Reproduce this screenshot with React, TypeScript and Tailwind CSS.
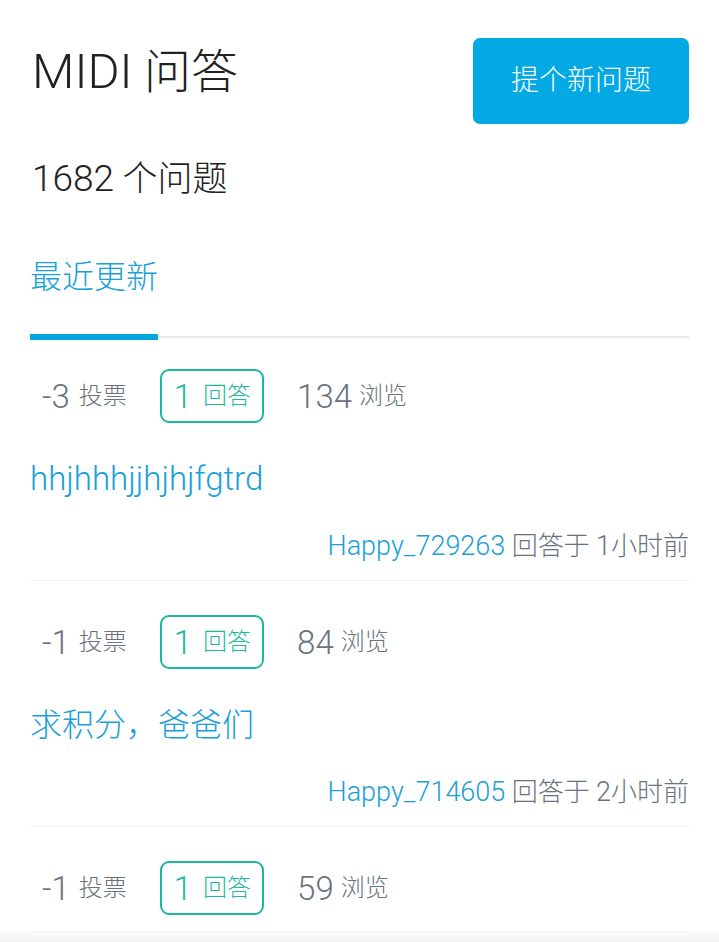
import React from "react";

type Item = {
  votes: string;
  answers: string;
  views: string;
  title: string;
  user: string;
  time: string;
};

const items: Item[] = [
  { votes: "-3", answers: "1", views: "134", title: "hhjhhhjjhjhjfgtrd", user: "Happy_729263", time: "1小时前" },
  { votes: "-1", answers: "1", views: "84", title: "求积分，爸爸们", user: "Happy_714605", time: "2小时前" },
  { votes: "-1", answers: "1", views: "59", title: "", user: "", time: "" },
];

function Stats({ it }: { it: Item }) {
  return (
    <div className="flex items-center gap-[21px] h-[54px]">
      <div className="flex items-center h-[54px] px-[10px] border-2 border-transparent text-[#6a737d]">
        <span className="text-[33px] leading-none">{it.votes}</span>
        <span className="text-[24px] leading-none ml-[9px]">投票</span>
      </div>
      <div className="flex items-center h-[54px] pl-[12px] pr-[11px] border-2 border-[#1cb99b] rounded-[9px] text-[#1cb99b]">
        <span className="text-[33px] leading-none">{it.answers}</span>
        <span className="text-[24px] leading-none ml-[11px]">回答</span>
      </div>
      <div className="flex items-center h-[54px] px-[10px] border-2 border-transparent text-[#6a737d]">
        <span className="text-[33px] leading-none">{it.views}</span>
        <span className="text-[24px] leading-none ml-[7px]">浏览</span>
      </div>
    </div>
  );
}

export default function App() {
  return (
    <div
      className="h-[942px] w-full overflow-hidden flex flex-col bg-white font-light"
      style={{ fontFamily: 'Roboto, "Noto Sans CJK SC", sans-serif' }}
    >
      <div className="flex-1 overflow-hidden px-[30px] pt-[38px]">
        <div className="flex items-start justify-between">
          <h1 className="mt-[11px] pl-[2px] text-[47px] leading-[46px] font-light text-[#222]">
            <span className="text-[49px]">MIDI</span> 问答
          </h1>
          <button className="w-[216px] h-[86px] rounded-[7px] bg-[#02a9e3] text-white text-[28px] leading-none">
            提个新问题
          </button>
        </div>
        <div className="mt-[37px] pl-[2px] text-[35px] leading-[35px] text-[#222]">
          <span className="text-[37px]">1682</span> 个问题
        </div>
        <div className="mt-[64px] text-[32px] leading-[32px] text-[#1aa2d8]">最近更新</div>
        <div className="mt-[41px] flex items-center h-[6px]">
          <div className="w-[128px] h-[6px] bg-[#03a6df]" />
          <div className="flex-1 h-[2px] bg-[#e6eaf0]" />
        </div>
        {items.map((it, i) => (
          <div
            key={i}
            className={`${i === 0 ? "pt-[29px]" : "pt-[34px]"} pb-[16px] border-b border-[#f1f3f6]`}
          >
            <Stats it={it} />
            {it.title && (
              <>
                <div className="mt-[32px] text-[32px] leading-[48px] text-[#1a9fd8]">
                  {/^[\x00-\x7f]+$/.test(it.title) ? <span className="text-[33px]">{it.title}</span> : it.title}
                </div>
                <div className="mt-[25px] text-[26px] leading-[36px] text-right text-[#6a737d]">
                  <span className="text-[27px] text-[#1a9fd8]">{it.user}</span> 回答于{" "}
                  <span className="text-[27px]">{it.time.slice(0, 1)}</span>
                  {it.time.slice(1)}
                </div>
              </>
            )}
          </div>
        ))}
      </div>
      <div className="h-[10px] bg-gradient-to-b from-[#fbfbfb] to-[#f1f1f1]" />
    </div>
  );
}
